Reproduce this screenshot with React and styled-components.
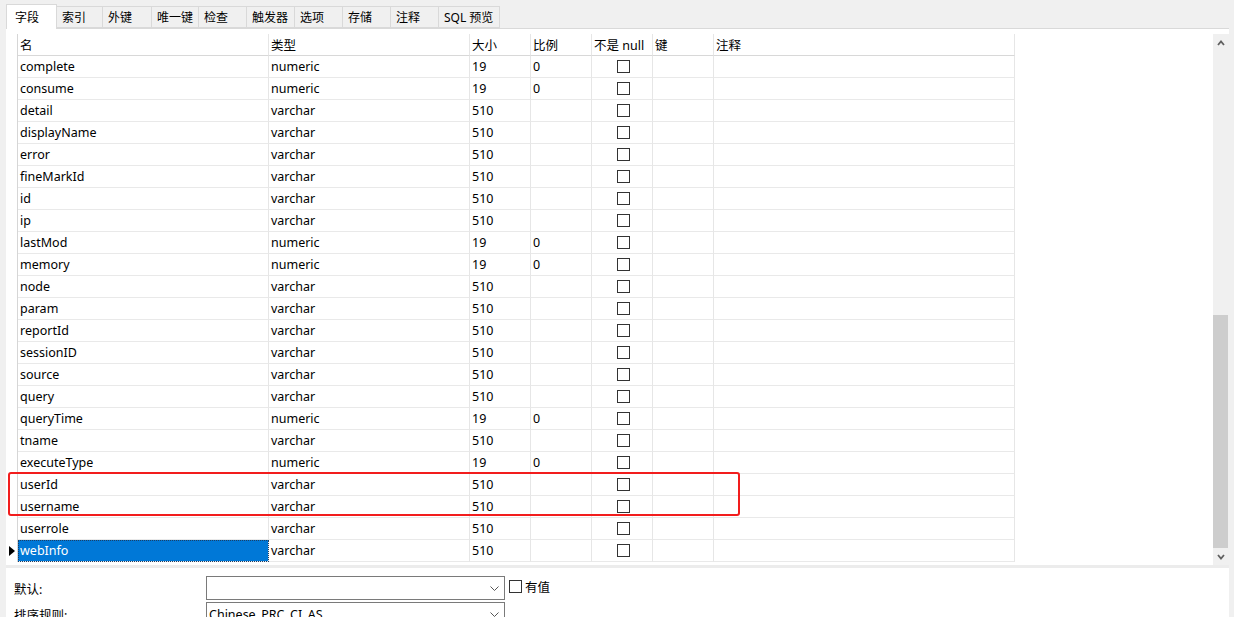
import React from 'react';
import styled, { createGlobalStyle } from 'styled-components';

const GlobalStyle = createGlobalStyle`
  html, body {
    margin: 0;
    padding: 0;
    background: #f0f0f0;
  }
  body {
    font-family: 'Noto Sans', 'Noto Sans CJK SC', sans-serif;
    font-size: 12.5px;
    color: #000;
  }
`;

const Page = styled.div`
  position: relative;
  width: 1234px;
  height: 617px;
  overflow: hidden;
  background: #f0f0f0;
  display: flex;
  flex-direction: column;
`;

const TabBar = styled.div`
  display: flex;
  flex-shrink: 0;
  align-items: flex-end;
  height: 28px;
  margin: 0 5px 0 6px;
  border-bottom: 1px solid #d9d9d9;
`;

const Tab = styled.div`
  box-sizing: border-box;
  width: ${(p) => p.$w}px;
  height: ${(p) => (p.$active ? 25 : 22)}px;
  margin-bottom: ${(p) => (p.$active ? -1 : 0)}px;
  padding-left: ${(p) => (p.$active ? 8 : 5)}px;
  display: flex;
  align-items: center;
  background: ${(p) => (p.$active ? '#fff' : '#f0f0f0')};
  border: 1px solid #d9d9d9;
  border-bottom: ${(p) => (p.$active ? 'none' : '1px solid #d9d9d9')};
  border-left: ${(p) => (p.$active || p.$first ? '1px solid #d9d9d9' : 'none')};
  font-size: 12px;
  white-space: nowrap;
`;

const Body = styled.div`
  display: flex;
  flex: 1;
  min-height: 0;
  margin-left: 6px;
  margin-right: 5px;
  flex-direction: column;
`;

const GridArea = styled.div`
  display: flex;
  flex-shrink: 0;
  height: 536px;
  background: #fff;
`;

const GridScroll = styled.div`
  flex: 1;
  padding-top: 5px;
`;

const Grid = styled.div`
  display: grid;
  grid-template-columns: 12px 251px 201px 61px 61px 61px 61px 301px;
  grid-auto-rows: 22px;
  width: 1009px;
`;

const Indicator = styled.div`
  box-sizing: border-box;
  border-right: 1px solid #d6d6d6;
  display: flex;
  align-items: center;
  justify-content: flex-end;
  padding-right: 2px;
`;

const Arrow = styled.div`
  width: 0;
  height: 0;
  border-top: 5.5px solid transparent;
  border-bottom: 5.5px solid transparent;
  border-left: 6px solid #000;
`;

const Cell = styled.div`
  box-sizing: border-box;
  border-right: 1px solid #e6e6e6;
  border-bottom: 1px solid ${(p) => (p.$head ? '#d8d8d8' : '#e9e9e9')};
  padding-left: 2px;
  display: flex;
  align-items: center;
  justify-content: ${(p) => (p.$center ? 'center' : 'flex-start')};
  white-space: nowrap;
  overflow: hidden;
  background: ${(p) => (p.$selected ? '#0078d7' : 'transparent')};
  color: ${(p) => (p.$selected ? '#fff' : '#000')};
  outline: ${(p) => (p.$selected ? '1px dotted #1b3f66' : 'none')};
  outline-offset: -1px;
`;

const Check = styled.span`
  box-sizing: border-box;
  display: inline-block;
  width: 13px;
  height: 13px;
  border: 1px solid #333;
  background: #fff;
  margin-right: ${(p) => (p.$gap ? 3 : 0)}px;
  flex-shrink: 0;
`;

const ScrollBar = styled.div`
  width: 16px;
  margin-top: 5px;
  display: flex;
  flex-direction: column;
  background: #f0f0f0;
`;

const ScrollBtn = styled.div`
  height: 17px;
  display: flex;
  align-items: center;
  justify-content: center;
`;

const Track = styled.div`
  flex: 1;
  display: flex;
  flex-direction: column;
  justify-content: flex-end;
`;

const Thumb = styled.div`
  height: 233px;
  width: 15px;
  background: #cdcdcd;
`;

const Separator = styled.div`
  flex-shrink: 0;
  height: 3px;
  background: #ececec;
`;

const Panel = styled.div`
  flex: 1;
  background: #fff;
  padding: 8px 0 0 8px;
  display: flex;
  flex-direction: column;
  gap: 2px;
`;

const FieldRow = styled.div`
  display: flex;
  align-items: flex-start;
  flex-shrink: 0;
`;

const Label = styled.div`
  width: 192px;
  height: 24px;
  display: flex;
  align-items: center;
  font-size: 12.5px;
`;

const Combo = styled.div`
  box-sizing: border-box;
  width: 299px;
  height: 24px;
  border: 1px solid #7a7a7a;
  display: flex;
  align-items: center;
  justify-content: space-between;
  padding: 0 5px 0 2px;
  font-size: 12.5px;
`;

const Extra = styled.label`
  display: flex;
  align-items: center;
  margin-left: 4px;
  margin-top: 1px;
  font-size: 12.5px;
`;

const Highlight = styled.div`
  position: absolute;
  left: 8px;
  top: 472px;
  width: 732px;
  height: 44px;
  box-sizing: border-box;
  border: 2px solid #f21d1d;
  border-radius: 3px;
  pointer-events: none;
`;

const tabs = [
  ['字段', 51],
  ['索引', 46],
  ['外键', 49],
  ['唯一键', 47],
  ['检查', 48],
  ['触发器', 48],
  ['选项', 48],
  ['存储', 48],
  ['注释', 48],
  ['SQL 预览', 61],
];

const headers = ['名', '类型', '大小', '比例', '不是 null', '键', '注释'];

const rows = [
  ['complete', 'numeric', '19', '0'],
  ['consume', 'numeric', '19', '0'],
  ['detail', 'varchar', '510', ''],
  ['displayName', 'varchar', '510', ''],
  ['error', 'varchar', '510', ''],
  ['fineMarkId', 'varchar', '510', ''],
  ['id', 'varchar', '510', ''],
  ['ip', 'varchar', '510', ''],
  ['lastMod', 'numeric', '19', '0'],
  ['memory', 'numeric', '19', '0'],
  ['node', 'varchar', '510', ''],
  ['param', 'varchar', '510', ''],
  ['reportId', 'varchar', '510', ''],
  ['sessionID', 'varchar', '510', ''],
  ['source', 'varchar', '510', ''],
  ['query', 'varchar', '510', ''],
  ['queryTime', 'numeric', '19', '0'],
  ['tname', 'varchar', '510', ''],
  ['executeType', 'numeric', '19', '0'],
  ['userId', 'varchar', '510', ''],
  ['username', 'varchar', '510', ''],
  ['userrole', 'varchar', '510', ''],
  ['webInfo', 'varchar', '510', ''],
];

const Chevron = ({ up }) => (
  <svg width="8" height="6" viewBox="0 0 8 6">
    <path
      d={up ? 'M1 5 L4 1.5 L7 5' : 'M1 1 L4 4.5 L7 1'}
      fill="none"
      stroke="#606060"
      strokeWidth="1.8"
    />
  </svg>
);

const DropArrow = () => (
  <svg width="9" height="5" viewBox="0 0 9 5">
    <path d="M0.5 0.5 L4.5 4.5 L8.5 0.5" fill="none" stroke="#555" strokeWidth="1" />
  </svg>
);

const App = () => {
  const last = rows.length - 1;
  return (
    <Page>
      <GlobalStyle />
      <TabBar>
        {tabs.map(([t, w], i) => (
          <Tab key={t} $w={w} $active={i === 0} $first={i === 0}>
            {t}
          </Tab>
        ))}
      </TabBar>
      <Body>
        <GridArea>
          <GridScroll>
            <Grid>
              <Indicator />
              {headers.map((h) => (
                <Cell key={h} $head>
                  {h}
                </Cell>
              ))}
              {rows.map(([name, type, size, scale], i) => (
                <React.Fragment key={name}>
                  <Indicator>{i === last && <Arrow />}</Indicator>
                  <Cell $selected={i === last}>{name}</Cell>
                  <Cell>{type}</Cell>
                  <Cell>{size}</Cell>
                  <Cell>{scale}</Cell>
                  <Cell $center>
                    <Check />
                  </Cell>
                  <Cell />
                  <Cell />
                </React.Fragment>
              ))}
            </Grid>
          </GridScroll>
          <ScrollBar>
            <ScrollBtn>
              <Chevron up />
            </ScrollBtn>
            <Track>
              <Thumb />
            </Track>
            <ScrollBtn>
              <Chevron />
            </ScrollBtn>
          </ScrollBar>
        </GridArea>
        <Separator />
        <Panel>
          <FieldRow>
            <Label>默认:</Label>
            <Combo>
              <span />
              <DropArrow />
            </Combo>
            <Extra>
              <Check $gap />
              有值
            </Extra>
          </FieldRow>
          <FieldRow>
            <Label>排序规则:</Label>
            <Combo>
              <span>Chinese_PRC_CI_AS</span>
              <DropArrow />
            </Combo>
          </FieldRow>
        </Panel>
      </Body>
      <Highlight />
    </Page>
  );
};

export default App;
